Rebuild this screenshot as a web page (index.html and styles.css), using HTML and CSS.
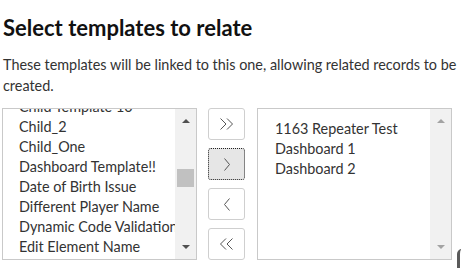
FILE: index.html
```html
<!DOCTYPE html>
<html>
<head>
    <title>Select templates to relate</title>
    <link rel="stylesheet" href="styles.css">
</head>
<body>
    <div class="page">
        <h1>Select templates to relate</h1>
        <p class="intro">These templates will be linked to this one, allowing related records to be created.</p>

        <div class="picker">
            <div class="listbox">
                <div class="viewport">
                    <ul class="options scrolled">
                        <li>Child Template 10</li>
                        <li>Child_2</li>
                        <li>Child_One</li>
                        <li>Dashboard Template!!</li>
                        <li>Date of Birth Issue</li>
                        <li>Different Player Name</li>
                        <li>Dynamic Code Validation</li>
                        <li>Edit Element Name</li>
                        <li>Email Template</li>
                    </ul>
                </div>
                <div class="scrollbar">
                    <span class="arrow up"></span>
                    <div class="track"><span class="thumb"></span></div>
                    <span class="arrow down"></span>
                </div>
            </div>

            <div class="movers">
                <button class="mover" title="Add all">
                    <svg width="16" height="12" viewBox="0 0 16 12"><path d="M1.5 0.5 L7 6 L1.5 11.5 M8 0.5 L13.5 6 L8 11.5" /></svg>
                </button>
                <button class="mover focused" title="Add selected">
                    <svg width="8" height="13" viewBox="0 0 8 13"><path d="M1.5 0.5 L6.5 6.5 L1.5 12.5" /></svg>
                </button>
                <button class="mover" title="Remove selected">
                    <svg width="8" height="13" viewBox="0 0 8 13"><path d="M6.5 0.5 L1.5 6.5 L6.5 12.5" /></svg>
                </button>
                <button class="mover" title="Remove all">
                    <svg width="16" height="12" viewBox="0 0 16 12"><path d="M7 0.5 L1.5 6 L7 11.5 M13.5 0.5 L8 6 L13.5 11.5" /></svg>
                </button>
            </div>

            <div class="listbox">
                <div class="viewport">
                    <ul class="options padded">
                        <li>1163 Repeater Test</li>
                        <li>Dashboard 1</li>
                        <li>Dashboard 2</li>
                    </ul>
                </div>
                <div class="scrollbar disabled">
                    <span class="arrow up"></span>
                    <div class="track"></div>
                    <span class="arrow down"></span>
                </div>
            </div>

            <div class="next-edge"></div>
        </div>
    </div>
</body>
</html>
```

FILE: styles.css
```css
body {
    margin: 0;
    overflow: hidden;
    font-family: Lato, "Open Sans", sans-serif;
    color: #333;
    background: #fff;
}
.page {
    padding: 14px 0 0 2px;
}
h1 {
    margin: 0 0 12px 1px;
    font-size: 22px;
    line-height: 28px;
    font-weight: bold;
    color: #111;
}
.intro {
    margin: 0 0 12px 1px;
    font-size: 14.4px;
    line-height: 21px;
    color: #333;
}
.picker {
    display: flex;
    align-items: flex-start;
}
.listbox {
    display: flex;
    flex-shrink: 0;
    width: 195px;
    height: 152px;
    box-sizing: border-box;
    border: 1px solid #c9c9c9;
    background: #fff;
}
.viewport {
    flex-grow: 1;
    overflow: hidden;
}
.options {
    list-style: none;
    margin: 0;
    padding: 0 0 0 16px;
    font-size: 14.4px;
    line-height: 20px;
    color: #333;
    white-space: nowrap;
}
.options.scrolled {
    margin-top: -12px;
}
.options.padded {
    padding: 10px 0 0 17px;
}
.scrollbar {
    width: 21px;
    flex-shrink: 0;
    display: flex;
    flex-direction: column;
    align-items: center;
    background: #f1f1f1;
}
.arrow {
    width: 0;
    height: 0;
    margin: 10px 0;
    border-left: 4px solid transparent;
    border-right: 4px solid transparent;
}
.arrow.up {
    border-bottom: 4px solid #505050;
}
.arrow.down {
    border-top: 4px solid #505050;
}
.disabled .arrow.up {
    border-bottom-color: #a3a3a3;
}
.disabled .arrow.down {
    border-top-color: #a3a3a3;
}
.track {
    flex-grow: 1;
    align-self: stretch;
    display: flex;
    flex-direction: column;
    align-items: center;
}
.thumb {
    width: 17px;
    height: 18px;
    margin-top: 36px;
    background: #c1c1c1;
}
.movers {
    display: flex;
    flex-shrink: 0;
    flex-direction: column;
    justify-content: space-between;
    height: 152px;
    margin: 0 12px 0 11px;
}
.mover {
    width: 37px;
    height: 32px;
    padding: 0;
    display: flex;
    align-items: center;
    justify-content: center;
    box-sizing: border-box;
    border: 1px solid #cfcfcf;
    border-radius: 3px;
    background: #fff;
}
.mover svg path {
    fill: none;
    stroke: #555;
    stroke-width: 1;
}
.mover.focused {
    background: #e6e6e6;
    border: 1px dotted #222;
}
.next-edge {
    width: 12px;
    height: 30px;
    margin: 141px 0 0 5px;
    border-left: 3px solid #5a5a5a;
    border-radius: 5px 0 0 0;
    flex-shrink: 0;
}
```
